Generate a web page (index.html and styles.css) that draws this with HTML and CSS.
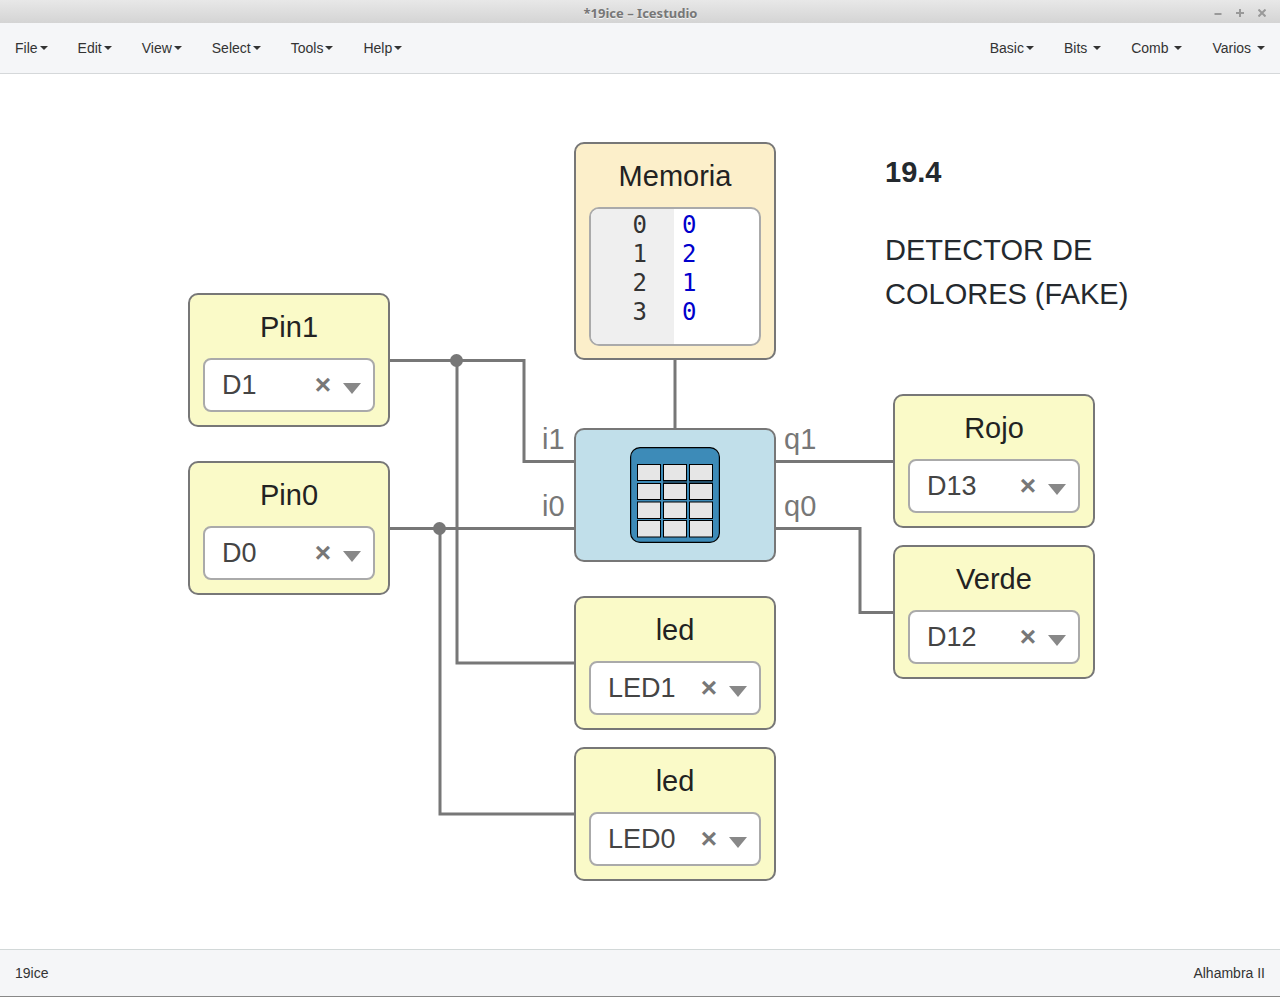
FILE: index.html
```html
<!DOCTYPE html>
<html lang="en">
<head>
<meta charset="utf-8">
<title>*19ice – Icestudio</title>
<link rel="stylesheet" href="styles.css">
</head>
<body>
<header class="titlebar">
  <h1 class="titlebar-text">*19ice – Icestudio</h1>
  <div class="window-buttons">
    <button type="button" aria-label="Minimize"><svg width="8" height="8" viewBox="0 0 8 8"><path d="M0.500 5H7.500"/></svg></button>
    <button type="button" aria-label="Maximize"><svg width="8" height="8" viewBox="0 0 8 8"><path d="M0 4H8M4 0V8"/></svg></button>
    <button type="button" aria-label="Close"><svg width="8" height="8" viewBox="0 0 8 8"><path d="M0.500 0.500L7.500 7.500M7.500 0.500L0.500 7.500"/></svg></button>
  </div>
</header>
<nav class="navbar" aria-label="Main menu">
  <div class="menu">
    <button type="button">File<i class="caret"></i></button>
    <button type="button">Edit<i class="caret"></i></button>
    <button type="button">View<i class="caret"></i></button>
    <button type="button">Select<i class="caret"></i></button>
    <button type="button">Tools<i class="caret"></i></button>
    <button type="button">Help<i class="caret"></i></button>
  </div>
  <div class="menu">
    <button type="button">Basic<i class="caret"></i></button>
    <button type="button">Bits&nbsp;<i class="caret"></i></button>
    <button type="button">Comb&nbsp;<i class="caret"></i></button>
    <button type="button">Varios&nbsp;<i class="caret"></i></button>
  </div>
</nav>

<main class="canvas">
  <svg class="wires" aria-hidden="true">
    <path d="M389 286.500H524V387.500H575"/>
    <path d="M389 454.500H575"/>
    <path d="M457 286.500V589H575"/>
    <path d="M440 454.500V740H575"/>
    <path d="M775 387.500H894"/>
    <path d="M775 454.500H860V538.500H894"/>
    <path d="M675 285V355"/>
    <circle cx="456.500" cy="286.500" r="6.500"/>
    <circle cx="439.500" cy="454.500" r="6.500"/>
  </svg>

  <section class="node memory at-memory">
    <label class="node-title" for="memory">Memoria</label>
    <div class="editor">
      <div class="gutter"><span>0</span><span>1</span><span>2</span><span>3</span></div>
      <textarea id="memory" class="code" rows="4" spellcheck="false">0
2
1
0</textarea>
    </div>
  </section>

  <section class="node at-pin1">
    <label class="node-title" for="pin1">Pin1</label>
    <div class="picker"><select id="pin1"><option>D1</option></select><button type="button" class="clear" aria-label="Clear Pin1">×</button><i class="arrow"></i></div>
  </section>
  <section class="node at-pin0">
    <label class="node-title" for="pin0">Pin0</label>
    <div class="picker"><select id="pin0"><option>D0</option></select><button type="button" class="clear" aria-label="Clear Pin0">×</button><i class="arrow"></i></div>
  </section>

  <section class="node table-block at-table" aria-label="Table">
    <svg width="90" height="96" viewBox="0 0 90 96" aria-hidden="true">
      <rect x="0.600" y="0.600" width="88.800" height="94.800" rx="9.500" fill="#3d8bb8" stroke="#000" stroke-width="1.200"/>
      <g fill="#e6e6e6" stroke="#000">
        <rect x="7.500" y="17.500" width="23" height="16"/><rect x="33.500" y="17.500" width="23" height="16"/><rect x="59.500" y="17.500" width="23" height="16"/>
        <rect x="7.500" y="36.500" width="23" height="16"/><rect x="33.500" y="36.500" width="23" height="16"/><rect x="59.500" y="36.500" width="23" height="16"/>
        <rect x="7.500" y="55" width="23" height="16.500"/><rect x="33.500" y="55" width="23" height="16.500"/><rect x="59.500" y="55" width="23" height="16.500"/>
        <rect x="7.500" y="73.500" width="23" height="16.500"/><rect x="33.500" y="73.500" width="23" height="16.500"/><rect x="59.500" y="73.500" width="23" height="16.500"/>
      </g>
      <path d="M33 35H57M59 35H83" stroke="#24506b" stroke-width="2"/>
    </svg>
  </section>
  <span class="port at-i1">i1</span>
  <span class="port at-i0">i0</span>
  <span class="port at-q1">q1</span>
  <span class="port at-q0">q0</span>

  <section class="node at-led1">
    <label class="node-title" for="led1">led</label>
    <div class="picker"><select id="led1"><option>LED1</option></select><button type="button" class="clear" aria-label="Clear led 1">×</button><i class="arrow"></i></div>
  </section>
  <section class="node at-led0">
    <label class="node-title" for="led0">led</label>
    <div class="picker"><select id="led0"><option>LED0</option></select><button type="button" class="clear" aria-label="Clear led 0">×</button><i class="arrow"></i></div>
  </section>
  <section class="node at-rojo">
    <label class="node-title" for="rojo">Rojo</label>
    <div class="picker"><select id="rojo"><option>D13</option></select><button type="button" class="clear" aria-label="Clear Rojo">×</button><i class="arrow"></i></div>
  </section>
  <section class="node at-verde">
    <label class="node-title" for="verde">Verde</label>
    <div class="picker"><select id="verde"><option>D12</option></select><button type="button" class="clear" aria-label="Clear Verde">×</button><i class="arrow"></i></div>
  </section>

  <article class="note">
    <h2>19.4</h2>
    <p>DETECTOR DE<br>COLORES (FAKE)</p>
  </article>
</main>

<footer class="statusbar"><span>19ice</span><span>Alhambra II</span></footer>
</body>
</html>
```
FILE: styles.css
```css
* { box-sizing: border-box; }

body {
  margin: 0;
  min-height: 100vh;
  display: flex;
  flex-direction: column;
  background: #fff;
  color: #333;
  font: 14px/20px "Liberation Sans", Arial, sans-serif;
}

button, select, textarea {
  margin: 0;
  padding: 0;
  border: 0;
  background: none;
  color: inherit;
  font: inherit;
}

/* Window frame */
.titlebar {
  display: grid;
  grid-template-columns: 1fr auto 1fr;
  align-items: center;
  height: 23px;
  padding: 3px 14px 0 15px;
  background: linear-gradient(#e8e8e8, #d4d4d4);
}
.titlebar-text {
  grid-column: 2;
  margin: 0;
  color: #777;
  font: bold 13px/20px "Noto Sans", sans-serif;
  text-shadow: 0 1px 0 #f4f4f4;
}
.window-buttons { display: flex; justify-content: flex-end; gap: 14px; }
.window-buttons button { display: flex; }
.window-buttons svg { fill: none; stroke: #999; stroke-width: 2; }

/* Menus */
.navbar {
  display: flex;
  justify-content: space-between;
  background: #f5f6f8;
  border-bottom: 1px solid #d5d8da;
}
.menu { display: flex; }
.menu button {
  display: flex;
  align-items: center;
  gap: 2px;
  padding: 15px;
}
.caret {
  border: 4px solid transparent;
  border-top-color: #333;
  border-bottom: 0;
}

/* Design canvas */
.canvas { position: relative; flex: 1; min-height: 820px; }
.wires {
  position: absolute;
  inset: 0;
  width: 100%;
  height: 100%;
  fill: none;
  stroke: #777;
  stroke-width: 3;
}
.wires circle { fill: #777; stroke: none; }

.node {
  position: absolute;
  display: flex;
  flex-direction: column;
  width: 202px;
  padding: 0 13px 13px;
  border: 2px solid #777;
  border-radius: 10px;
  background: #fafac8;
}
.node-title {
  padding-top: 2px;
  color: #222;
  font-size: 29px;
  line-height: 61px;
  text-align: center;
}
.memory { padding-bottom: 12px; background: #fcefca; }
.table-block {
  height: 134px;
  padding: 0;
  align-items: center;
  justify-content: center;
  background: #c1dfea;
}

.at-memory { left: 574px; top: 68px; }
.at-pin1 { left: 188px; top: 219px; }
.at-pin0 { left: 188px; top: 387px; }
.at-table { left: 574px; top: 354px; }
.at-led1 { left: 574px; top: 522px; }
.at-led0 { left: 574px; top: 673px; }
.at-rojo { left: 893px; top: 320px; }
.at-verde { left: 893px; top: 471px; }

.port {
  position: absolute;
  color: #777;
  font-size: 29px;
  line-height: 34px;
}
.at-i1 { left: 542px; top: 348px; }
.at-i0 { left: 542px; top: 415px; }
.at-q1 { left: 784px; top: 348px; }
.at-q0 { left: 784px; top: 415px; }

.picker { position: relative; display: flex; }
.picker select {
  flex: 1;
  height: 54px;
  padding: 0 60px 0 17px;
  appearance: none;
  border: 2px solid #aaa;
  border-radius: 8px;
  background: #fff;
  color: #444;
  font-size: 27px;
}
.clear {
  position: absolute;
  right: 44px;
  top: 11px;
  color: #777;
  font-size: 28px;
  font-weight: bold;
  line-height: 32px;
}
.arrow {
  position: absolute;
  right: 14px;
  top: 25px;
  border: 9px solid transparent;
  border-top: 11px solid #888;
  border-bottom: 0;
}

.editor {
  display: flex;
  height: 139px;
  overflow: hidden;
  border: 2px solid #aaa;
  border-radius: 10px;
  background: #fff;
  font: 24px/29px "DejaVu Sans Mono", monospace;
}
.gutter {
  display: flex;
  flex-direction: column;
  width: 83px;
  padding: 2px 27px 0 0;
  background: #efefef;
  text-align: right;
}
.code {
  flex: 1;
  min-width: 0;
  padding: 2px 0 0 8px;
  resize: none;
  overflow: hidden;
  color: #00c;
}

.note {
  position: absolute;
  left: 885px;
  top: 76px;
  color: #24292e;
  font-size: 29px;
  line-height: 44px;
}
.note h2 { margin: 0 0 34px; font-size: 29px; line-height: 44px; }
.note p { margin: 0; }

.statusbar {
  display: flex;
  justify-content: space-between;
  padding: 13px 15px;
  border-top: 1px solid #d2d8d8;
  border-bottom: 1px solid #888;
  background: #f5f6f8;
}
```
